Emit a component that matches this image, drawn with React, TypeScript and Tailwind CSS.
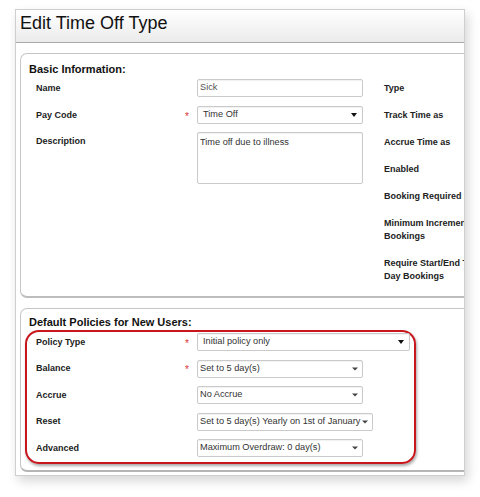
import React from "react";

function ArrowA() {
  return (
    <svg width="6" height="4" viewBox="0 0 6 4" className="block">
      <path d="M0 0H6L3 4Z" fill="#111" />
    </svg>
  );
}

function ArrowB() {
  return (
    <svg width="6" height="4" viewBox="0 0 6 4" className="block">
      <path d="M0 0.5H6L3 3.5Z" fill="#444" />
    </svg>
  );
}

function Row({
  label,
  req,
  top,
  children,
}: {
  label: string;
  req?: boolean;
  top?: boolean;
  children: React.ReactNode;
}) {
  return (
    <div className={top ? "flex items-start" : "flex items-center"}>
      <div
        className={
          top
            ? "w-[147px] pt-[3px] text-[9px] font-bold leading-[13px] text-[#222]"
            : "w-[147px] text-[9px] font-bold leading-[13px] text-[#222]"
        }
      >
        {label}
      </div>
      <div className="w-[14px] pl-[2px] mt-[2px] text-[10px] leading-[13px] text-[#d33]">
        {req ? "*" : ""}
      </div>
      {children}
    </div>
  );
}

const box =
  "h-[18px] border border-[#cacaca] rounded-[2px] bg-white shadow-[inset_0_1px_1px_rgba(0,0,0,0.06)] text-[9.2px] text-[#333] flex items-center justify-between";

function RightLabel({ children }: { children: React.ReactNode }) {
  return (
    <div className="text-[9px] font-bold leading-[13px] text-[#222] whitespace-nowrap">
      {children}
    </div>
  );
}

export default function App() {
  return (
    <div className="w-[480px] h-[497px] bg-white pt-[9px] pl-[15px] font-['Liberation_Sans',Arial,sans-serif] text-[#222]">
      <div className="w-[450px] h-[467px] border border-[#cfcfcf] bg-white overflow-hidden shadow-[3px_5px_10px_rgba(0,0,0,0.16)]">
        {/* Header */}
        <div className="h-[33px] bg-gradient-to-b from-white to-[#ebebeb] border-b border-[#a9a9a9] pl-[4px] text-[18px] leading-[26px] text-[#111] whitespace-nowrap">
          Edit Time Off Type
        </div>

        <div className="pl-[4px]">
          {/* Basic Information */}
          <div className="mt-[10px] w-[540px] h-[245px] border border-[#c6c6c6] border-b-2 border-b-[#bdbdbd] rounded-[7px] pt-[9px]">
            <div className="pl-[8px] text-[11px] font-bold leading-[13px] text-[#111]">
              Basic Information:
            </div>
            <div className="flex">
              <div className="flex flex-col pl-[15px] pt-[3px]">
                <Row label="Name">
                  <div className={box + " w-[166px] pl-[2px] text-[#555]"}>Sick</div>
                </Row>
                <div className="mt-[9px]">
                  <Row label="Pay Code" req>
                    <div className={box + " w-[166px] pl-[5px] pr-[5px] text-[#222]"}>
                      <span>Time Off</span>
                      <ArrowA />
                    </div>
                  </Row>
                </div>
                <div className="mt-[8px]">
                  <Row label="Description" top>
                    <div className="w-[166px] h-[52px] border border-[#cacaca] rounded-[2px] bg-white shadow-[inset_0_1px_1px_rgba(0,0,0,0.06)] pl-[2px] pt-[3px] text-[9.2px] leading-[12px] text-[#333]">
                      Time off due to illness
                    </div>
                  </Row>
                </div>
              </div>
              <div className="ml-[21px] pt-[6px] flex flex-col gap-[14px]">
                <RightLabel>Type</RightLabel>
                <RightLabel>Track Time as</RightLabel>
                <RightLabel>Accrue Time as</RightLabel>
                <RightLabel>Enabled</RightLabel>
                <RightLabel>Booking Required</RightLabel>
                <RightLabel>
                  Minimum Increment for
                  <br />
                  Bookings
                </RightLabel>
                <RightLabel>
                  Require Start/End Time for Partial
                  <br />
                  Day Bookings
                </RightLabel>
              </div>
            </div>
          </div>

          {/* Default Policies */}
          <div className="mt-[10px] w-[540px] h-[164px] border border-[#c6c6c6] border-b-2 border-b-[#b5b5b5] rounded-[7px] pt-[7px]">
            <div className="pl-[8px] text-[11px] font-bold leading-[13px] text-[#111] whitespace-nowrap">
              Default Policies for New Users:
            </div>
            <div className="mt-[1px] ml-[4px] w-[391px] h-[134px] border-2 border-[#c8161d] rounded-[14px] shadow-[1px_2px_3px_rgba(0,0,0,0.35)] pl-[9px] pt-[1px] flex flex-col gap-[8.5px]">
              <Row label="Policy Type" req>
                <div className={box + " w-[213px] pl-[5px] pr-[5px]"}>
                  <span>Initial policy only</span>
                  <ArrowA />
                </div>
              </Row>
              <Row label="Balance" req>
                <div className={box + " w-[166px] pl-[2px] pr-[4px]"}>
                  <span>Set to 5 day(s)</span>
                  <ArrowB />
                </div>
              </Row>
              <Row label="Accrue">
                <div className={box + " w-[166px] pl-[2px] pr-[4px]"}>
                  <span>No Accrue</span>
                  <ArrowB />
                </div>
              </Row>
              <Row label="Reset">
                <div className={box + " w-[176px] pl-[2px] pr-[4px]"}>
                  <span className="whitespace-nowrap">Set to 5 day(s) Yearly on 1st of January</span>
                  <ArrowB />
                </div>
              </Row>
              <Row label="Advanced">
                <div className={box + " w-[166px] pl-[2px] pr-[4px]"}>
                  <span>Maximum Overdraw: 0 day(s)</span>
                  <ArrowB />
                </div>
              </Row>
            </div>
          </div>
        </div>
      </div>
    </div>
  );
}
